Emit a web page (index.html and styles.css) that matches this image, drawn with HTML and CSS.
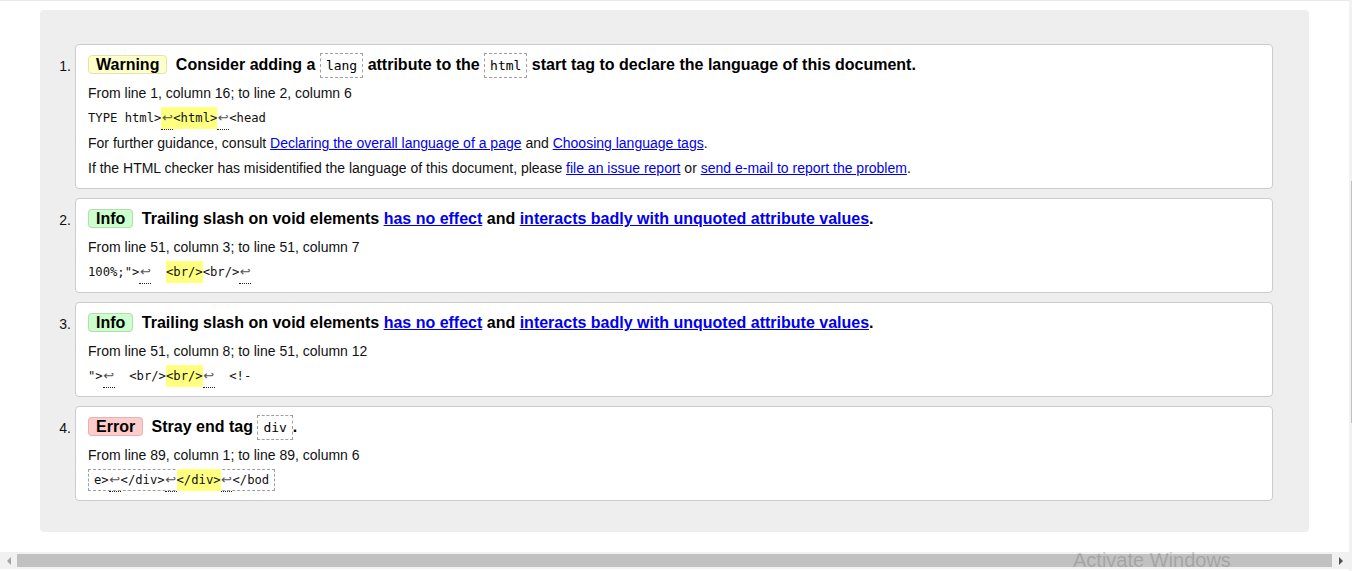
FILE: index.html
```html
<!DOCTYPE html>
<html lang="en">
<head>
<meta charset="utf-8">
<title>Validator results</title>
<link rel="stylesheet" href="styles.css">
</head>
<body>
<div class="page">
  <div class="main">
    <div class="content">
      <div class="results">
        <ol class="msg-list">
          <li>
            <div class="box">
              <p class="head"><strong class="badge warning">Warning</strong> Consider adding a <code class="tag">lang</code> attribute to the <code class="tag">html</code> start tag to declare the language of this document.</p>
              <p class="row">From line 1, column 16; to line 2, column 6</p>
              <p class="extract"><code>TYPE html&gt;<b class="hl"><span class="lf">↩</span>&lt;html&gt;</b><span class="lf">↩</span>&lt;head</code></p>
              <p class="row">For further guidance, consult <a href="#">Declaring the overall language of a page</a> and <a href="#">Choosing language tags</a>.</p>
              <p class="row">If the HTML checker has misidentified the language of this document, please <a href="#">file an issue report</a> or <a href="#">send e-mail to report the problem</a>.</p>
            </div>
          </li>
          <li>
            <div class="box">
              <p class="head"><strong class="badge info">Info</strong> Trailing slash on void elements <a href="#">has no effect</a> and <a href="#">interacts badly with unquoted attribute values</a>.</p>
              <p class="row">From line 51, column 3; to line 51, column 7</p>
              <p class="extract"><code>100%;"&gt;<span class="lf">↩</span>  <b class="hl">&lt;br/&gt;</b>&lt;br/&gt;<span class="lf">↩</span></code></p>
            </div>
          </li>
          <li>
            <div class="box">
              <p class="head"><strong class="badge info">Info</strong> Trailing slash on void elements <a href="#">has no effect</a> and <a href="#">interacts badly with unquoted attribute values</a>.</p>
              <p class="row">From line 51, column 8; to line 51, column 12</p>
              <p class="extract"><code>"&gt;<span class="lf">↩</span>  &lt;br/&gt;<b class="hl">&lt;br/&gt;</b><span class="lf">↩</span>  &lt;!-</code></p>
            </div>
          </li>
          <li>
            <div class="box">
              <p class="head"><strong class="badge error">Error</strong> Stray end tag <code class="tag">div</code>.</p>
              <p class="row">From line 89, column 1; to line 89, column 6</p>
              <p class="extract"><code class="focused">e&gt;<span class="lf">↩</span>&lt;/div&gt;<span class="lf">↩</span><b class="hl">&lt;/div&gt;</b><span class="lf">↩</span>&lt;/bod</code></p>
            </div>
          </li>
        </ol>
      </div>
    </div>
    <div class="hscroll">
      <div class="arrow arrow-left"><svg width="6" height="8" viewBox="0 0 6 8"><polygon points="5,0 5,8 1,4" fill="#a3a3a3"/></svg></div>
      <div class="thumb"></div>
      <div class="arrow arrow-right"><svg width="6" height="8" viewBox="0 0 6 8"><polygon points="1,0 1,8 5,4" fill="#505050"/></svg></div>
    </div>
  </div>
  <div class="vscroll"><div class="vthumb"></div></div>
  <div class="watermark">Activate Windows</div>
</div>
</body>
</html>
```
FILE: styles.css
```css
html, body {
  margin: 0;
  padding: 0;
  background: #fff;
}

body {
  font-family: "Liberation Sans", Arial, sans-serif;
  color: #000;
}

.page {
  position: relative;
  display: flex;
  width: 1352px;
  height: 571px;
  overflow: hidden;
}

.main {
  flex: 1;
  display: flex;
  flex-direction: column;
  padding-bottom: 2px;
}

.content {
  flex: 1;
  border-top: 1px solid #e8e8e8;
  padding: 9px 40px 0 40px;
}

.results {
  background: #eeeeee;
  border-radius: 4px;
  padding: 34px 36px 31px 0;
}

.msg-list {
  list-style: none;
  margin: 0;
  padding: 0;
  counter-reset: item;
}

.msg-list li {
  display: flex;
  counter-increment: item;
  margin-bottom: 9px;
}

.msg-list li:last-child {
  margin-bottom: 0;
}

.msg-list li::before {
  content: counter(item) ".";
  flex: 0 0 35px;
  box-sizing: border-box;
  text-align: right;
  padding-right: 4px;
  font-size: 14px;
  line-height: 20px;
  margin-top: 12px;
  color: #111;
}

.box {
  flex: 1;
  background: #fff;
  border: 1px solid #cccccc;
  border-radius: 4px;
  padding: 10px 12px 7px 12px;
}

.head {
  margin: 0 0 6px 0;
  font-size: 16px;
  font-weight: bold;
  line-height: 20px;
}

.badge {
  display: inline;
  padding: 0 7px;
  border: 1px solid;
  border-radius: 4px;
  margin-right: 4px;
  font-weight: bold;
}

.badge.warning {
  background: #ffffcc;
  border-color: #e3e3b0;
}

.badge.info {
  background: #ccffcc;
  border-color: #b3dcb3;
}

.badge.error {
  background: #ffcccc;
  border-color: #e6b3b3;
}

.tag {
  font-family: "DejaVu Sans Mono", monospace;
  font-weight: normal;
  font-size: 13px;
  line-height: 16px;
  padding: 4px 5px;
  border: 1px dashed #a0a0a0;
  background: #fff;
}

.row {
  margin: 0;
  font-size: 14px;
  line-height: 25px;
  color: #111;
}

.extract {
  margin: 0;
  font-size: 12.2px;
  line-height: 25px;
}

.extract code {
  font-family: "DejaVu Sans Mono", monospace;
  font-size: 12.2px;
  white-space: pre;
  color: #111;
}

.extract code.focused {
  padding: 3px 5px;
  border: 1px dashed #a0a0a0;
}

.hl {
  font-weight: normal;
  background: #ffff80;
  padding: 4px 0;
}

.lf {
  font-family: "DejaVu Sans", sans-serif;
  font-size: 13px;
  line-height: 12px;
  color: #555;
  padding: 0 0.5px 4px 0.5px;
  border-bottom: 1px dotted #222;
}

a {
  color: #0000ee;
  text-decoration: underline;
}

.hscroll {
  height: 17px;
  background: #f1f1f1;
  display: flex;
  align-items: center;
}

.arrow {
  width: 17px;
  height: 17px;
  display: flex;
  align-items: center;
  justify-content: center;
}

.thumb {
  flex: 1;
  height: 13px;
  background: #c1c1c1;
}

.vscroll {
  width: 3px;
  background: #f1f1f1;
}

.vthumb {
  margin-top: 181px;
  margin-left: 2px;
  width: 1px;
  height: 242px;
  background: #c1c1c1;
}

.watermark {
  position: absolute;
  left: 1073px;
  top: 548px;
  font-family: "Liberation Sans", Arial, sans-serif;
  font-size: 20px;
  line-height: 24px;
  color: rgba(110, 110, 110, 0.35);
  white-space: nowrap;
}
```
